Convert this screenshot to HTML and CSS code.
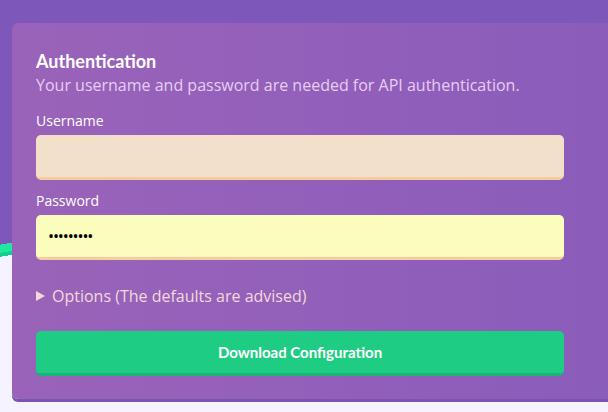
FILE: index.html
```html
<!DOCTYPE html>
<html lang="en">
<head>
<meta charset="utf-8">
<title>Authentication</title>
<link rel="stylesheet" href="styles.css">
</head>
<body>
<div class="page">
  <form class="card">
    <h2 class="card-title">Authentication</h2>
    <p class="card-sub">Your username and password are needed for API authentication.</p>
    <label class="field">
      <span class="field-label">Username</span>
      <input class="input input-user" type="text">
    </label>
    <label class="field">
      <span class="field-label">Password</span>
      <input class="input input-pass" type="password" value="secretpwd">
    </label>
    <details class="options">
      <summary>Options (The defaults are advised)</summary>
    </details>
    <button class="btn" type="button">Download Configuration</button>
  </form>
</div>
</body>
</html>
```

FILE: styles.css
```css
* { box-sizing: border-box; }
html, body { margin: 0; padding: 0; }
body { font-family: "Open Sans", "Noto Sans", sans-serif; }

.page {
  min-height: 100vh;
  padding: 23px 0 0 12px;
  overflow: hidden;
  background: linear-gradient(170deg,
    #7e57ba 0, #7e57ba 241px,
    #1de9a0 241px, #1de9a0 249px,
    #14cf8c 249px, #14cf8c 253px,
    #f5f3ff 253px, #f5f3ff 100%);
}

.card {
  width: 620px;
  margin: 0;
  padding: 26px 68px 23px 24px;
  border-radius: 6px;
  background: linear-gradient(90deg, #9a63b9 0%, #8a5cbb 100%);
  box-shadow: 0 3px 0 #7b53b1;
  display: flex;
  flex-direction: column;
}

.card-title {
  margin: 0;
  font-family: "Lato", "Open Sans", sans-serif;
  font-weight: 700;
  font-size: 18px;
  line-height: 24px;
  color: #ffffff;
}

.card-sub {
  margin: 0 0 14px;
  font-size: 16px;
  line-height: 24px;
  color: #e8cdf3;
}

.field {
  display: flex;
  flex-direction: column;
  margin-bottom: 11px;
}

.field-label {
  font-size: 14px;
  line-height: 20px;
  color: #ffffff;
  margin-bottom: 4px;
}

.input {
  height: 45px;
  border: 0;
  border-bottom: 3px solid #f6cc9f;
  border-radius: 5px;
  padding: 0 12px;
  font-family: inherit;
  font-size: 16px;
  color: #000;
  outline: none;
}
.input-user { background: #f3e0cb; }
.input-pass { background: #fafdbc; letter-spacing: -1.1px; }

.options {
  margin: 13px 0 23px;
  color: #f3d9d9;
  font-size: 16px;
  line-height: 24px;
}
.options summary {
  cursor: pointer;
  list-style: none;
  display: flex;
  align-items: center;
  gap: 7px;
}
.options summary::-webkit-details-marker { display: none; }
.options summary::before {
  content: "";
  width: 0; height: 0;
  border-top: 5px solid transparent;
  border-bottom: 5px solid transparent;
  border-left: 9px solid #f3d9d9;
}

.btn {
  height: 45px;
  border: 0;
  border-bottom: 3px solid #19b574;
  border-radius: 5px;
  background: #1ecd83;
  color: #ffffff;
  font-family: "Lato", "Open Sans", sans-serif;
  font-weight: 700;
  font-size: 15px;
  cursor: pointer;
}
```
